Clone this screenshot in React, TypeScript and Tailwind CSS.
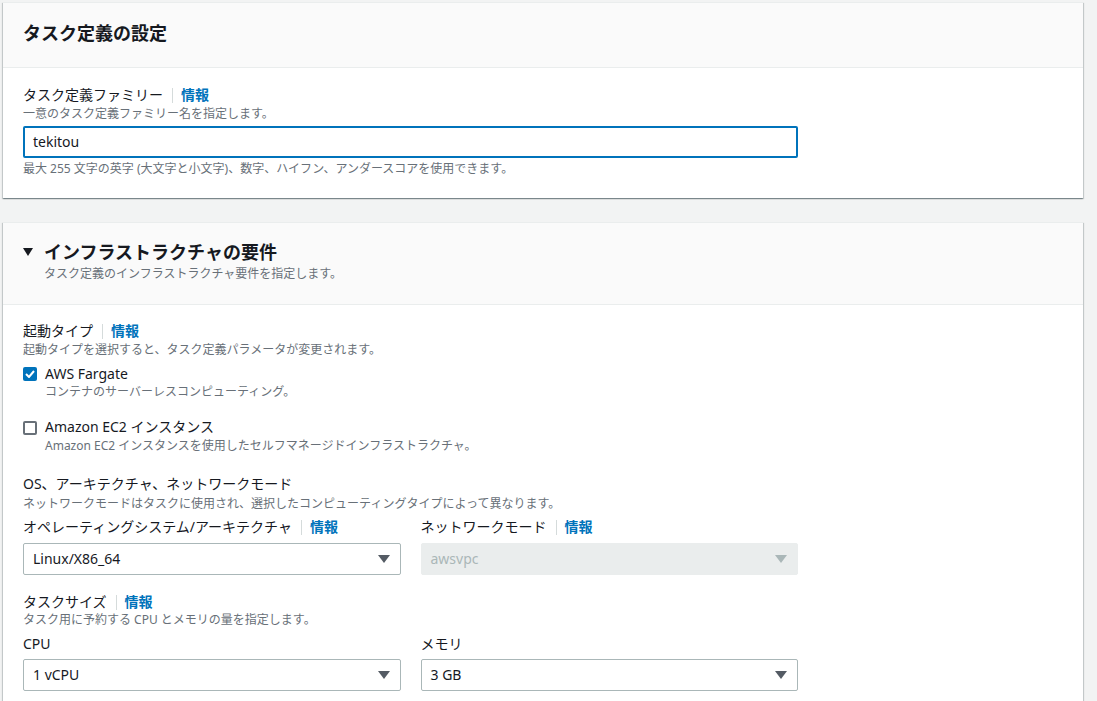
import React from "react";

const FONT = { fontFamily: '"Noto Sans", "Noto Sans CJK JP", sans-serif' };

function Info() {
  return (
    <>
      <span className="ml-[9px] inline-block h-[15px] w-px bg-[#d5dbdb]" />
      <span className="ml-[8px] text-[14px] font-semibold leading-[20px] text-[#0073bb]">情報</span>
    </>
  );
}

function Label({ text, info = false }: { text: string; info?: boolean }) {
  return (
    <div className="flex items-center text-[14px] leading-[20px] text-[#16191f]">
      <span>{text}</span>
      {info && <Info />}
    </div>
  );
}

function Desc({ text, className = "" }: { text: string; className?: string }) {
  return <div className={`text-[12px] leading-[16px] text-[#687078] ${className}`}>{text}</div>;
}

function Arrow({ color }: { color: string }) {
  return (
    <svg width="12" height="8" viewBox="0 0 12 8">
      <polygon points="0,0 12,0 6,8" fill={color} />
    </svg>
  );
}

function Select({ value, disabled = false }: { value: string; disabled?: boolean }) {
  return (
    <div
      className={`flex h-[32px] items-center justify-between rounded-[2px] border pl-[9px] pr-[10px] text-[14px] leading-[20px] ${
        disabled ? "border-[#eaeded] bg-[#eaeded] text-[#aab7b8]" : "border-[#aab7b8] bg-white text-[#16191f]"
      }`}
    >
      <span>{value}</span>
      <Arrow color={disabled ? "#aab7b8" : "#545b64"} />
    </div>
  );
}

function Checkbox({ checked }: { checked: boolean }) {
  return checked ? (
    <div className="flex h-[14px] w-[14px] items-center justify-center rounded-[2px] bg-[#0073bb]">
      <svg width="10" height="8" viewBox="0 0 10 8">
        <polyline points="1,4 4,7 9,1" fill="none" stroke="white" strokeWidth="2" />
      </svg>
    </div>
  ) : (
    <div className="h-[14px] w-[14px] rounded-[2px] border-2 border-[#687078] bg-white" />
  );
}

const cardCls =
  "w-[1080px] bg-white shadow-[0_1px_1px_0_rgba(0,28,36,0.3),1px_1px_1px_0_rgba(0,28,36,0.15),-1px_1px_1px_0_rgba(0,28,36,0.15)] border-t border-[#eaeded]";

export default function App() {
  return (
    <div className="min-h-[701px] bg-[#f2f3f3] pl-[3px] pt-[2px]" style={FONT}>
      {/* Card 1 */}
      <div className={cardCls}>
        <div className="h-[65px] border-b border-[#eaeded] bg-[#fafafa] px-[20px] pt-[18px]">
          <div className="text-[18px] font-bold leading-[24px] text-[#16191f]">タスク定義の設定</div>
        </div>
        <div className="px-[20px] pb-[21px] pt-[17px]">
          <Label text="タスク定義ファミリー" info />
          <Desc text="一意のタスク定義ファミリー名を指定します。" className="mt-[1px]" />
          <div className="mt-[4px] flex h-[32px] w-[775px] items-center rounded-[2px] border-2 border-[#0073bb] pl-[8px] text-[14px] leading-[20px] text-[#16191f]">
            tekitou
          </div>
          <Desc text="最大 255 文字の英字 (大文字と小文字)、数字、ハイフン、アンダースコアを使用できます。" className="mt-[3px]" />
        </div>
      </div>

      {/* Card 2 */}
      <div className={`${cardCls} mt-[24px]`}>
        <div className="border-b border-[#eaeded] bg-[#fafafa] px-[20px] pb-[22px] pt-[17px]">
          <div className="flex items-center">
            <svg width="10" height="8" viewBox="0 0 10 8">
              <polygon points="0,0 10,0 5,8" fill="#16191f" />
            </svg>
            <span className="ml-[11px] text-[18px] font-bold leading-[24px] text-[#16191f]">
              インフラストラクチャの要件
            </span>
          </div>
          <Desc text="タスク定義のインフラストラクチャ要件を指定します。" className="ml-[21px] mt-[2px]" />
        </div>
        <div className="w-[815px] px-[20px] pb-[30px] pt-[16px]">
          <Label text="起動タイプ" info />
          <Desc text="起動タイプを選択すると、タスク定義パラメータが変更されます。" className="mt-[1px]" />

          <div className="mt-[6px] flex">
            <div className="pt-[3px]">
              <Checkbox checked />
            </div>
            <div className="ml-[8px]">
              <div className="text-[14px] leading-[20px] text-[#16191f]">AWS Fargate</div>
              <Desc text="コンテナのサーバーレスコンピューティング。" />
            </div>
          </div>

          <div className="mt-[17px] flex">
            <div className="pt-[4px]">
              <Checkbox checked={false} />
            </div>
            <div className="ml-[8px]">
              <div className="text-[14px] leading-[20px] text-[#16191f]">Amazon EC2 インスタンス</div>
              <Desc text="Amazon EC2 インスタンスを使用したセルフマネージドインフラストラクチャ。" className="mt-[1px]" />
            </div>
          </div>

          <div className="mt-[20px]">
            <Label text="OS、アーキテクチャ、ネットワークモード" />
            <Desc text="ネットワークモードはタスクに使用され、選択したコンピューティングタイプによって異なります。" className="mt-[2px]" />
          </div>

          <div className="mt-[5px] grid grid-cols-2 gap-x-[20px]">
            <div>
              <Label text="オペレーティングシステム/アーキテクチャ" info />
              <div className="mt-[6px]">
                <Select value="Linux/X86_64" />
              </div>
            </div>
            <div>
              <Label text="ネットワークモード" info />
              <div className="mt-[6px]">
                <Select value="awsvpc" disabled />
              </div>
            </div>
          </div>

          <div className="mt-[17px]">
            <Label text="タスクサイズ" info />
            <Desc text="タスク用に予約する CPU とメモリの量を指定します。" />
          </div>

          <div className="mt-[6px] grid grid-cols-2 gap-x-[20px]">
            <div>
              <Label text="CPU" />
              <div className="mt-[5px]">
                <Select value="1 vCPU" />
              </div>
            </div>
            <div>
              <Label text="メモリ" />
              <div className="mt-[5px]">
                <Select value="3 GB" />
              </div>
            </div>
          </div>
        </div>
      </div>
    </div>
  );
}
